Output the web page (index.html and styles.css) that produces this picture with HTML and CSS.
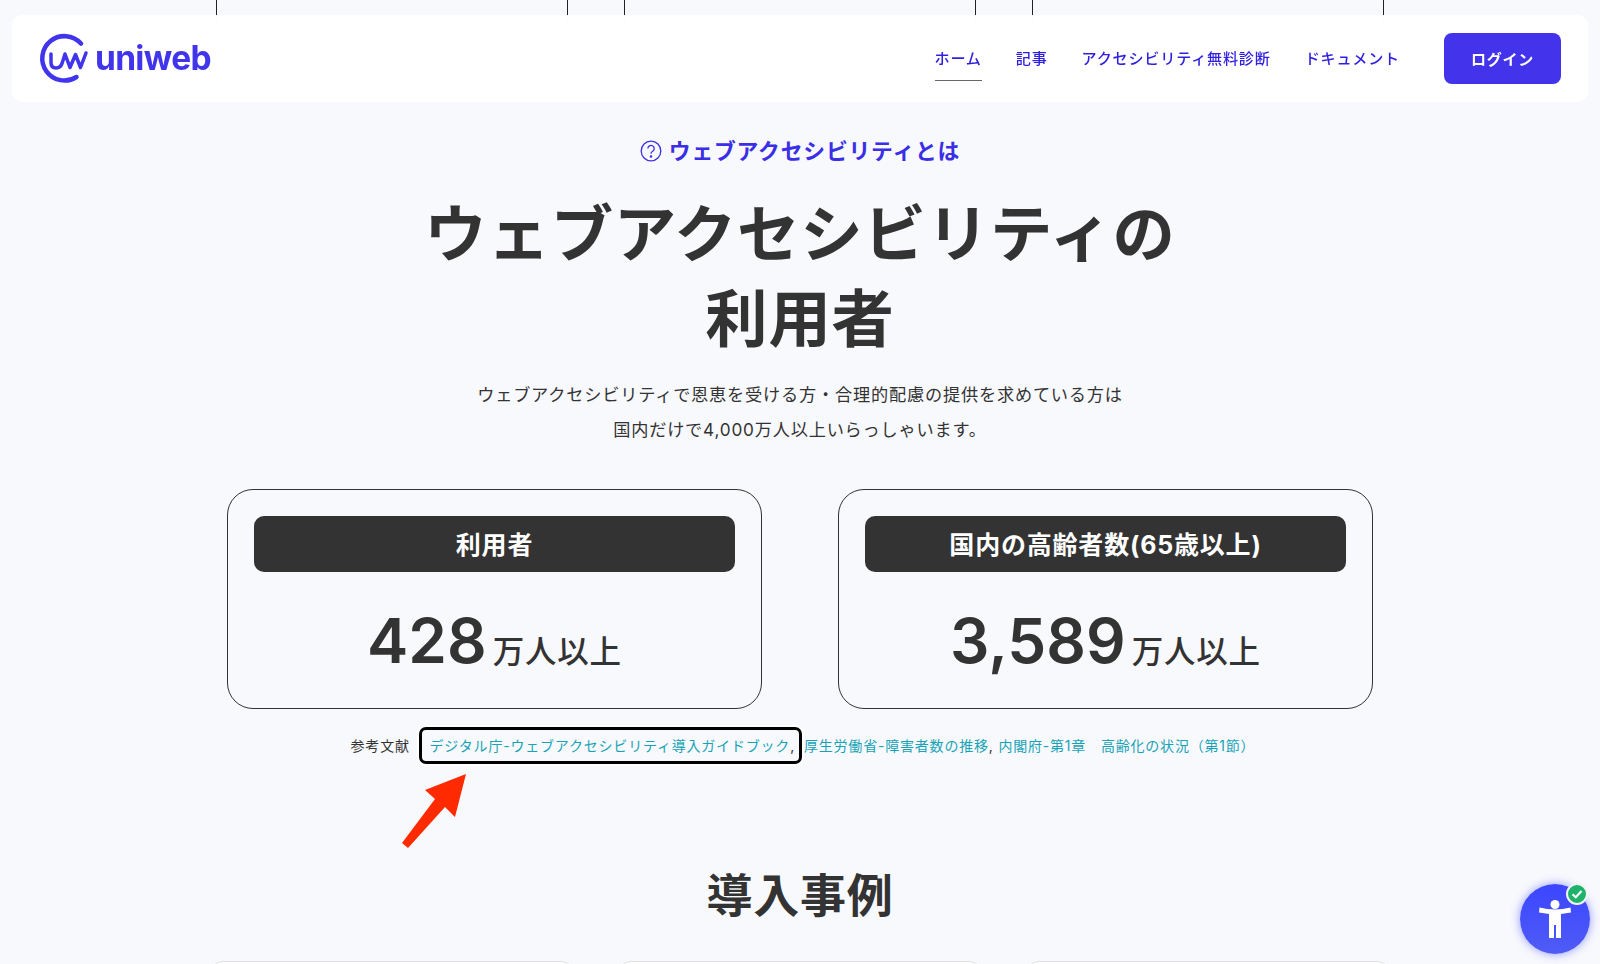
FILE: index.html
```html
<!DOCTYPE html>
<html lang="ja">

<head>
    <meta charset="UTF-8">
    <meta name="viewport" content="width=device-width, initial-scale=1.0">
    <title>ウェブアクセシビリティの利用者 | uniweb</title>
    <link rel="stylesheet" href="styles.css">
</head>

<body>
    <div class="page">
        <div class="card-row card-row-top">
            <div class="stub"></div>
            <div class="stub"></div>
            <div class="stub"></div>
        </div>

        <header class="site-header">
            <a class="logo" href="#">
                <svg class="logo-mark" viewBox="0 0 50 50" width="50" height="50" aria-hidden="true">
                    <path class="logo-ring" d="M44 9.500A22.200 22.200 0 1 0 39.500 43" />
                    <path class="logo-uw" d="M14 20V28.500Q14 34 19 34Q24 34 25.500 28L28 20L33 33.500L38.500 20.500L43.500 33.500L49 19" />
                </svg>
                <span class="logo-text">uniweb</span>
            </a>
            <nav class="nav">
                <a class="nav-link active" href="#">ホーム</a>
                <a class="nav-link" href="#">記事</a>
                <a class="nav-link" href="#">アクセシビリティ無料診断</a>
                <a class="nav-link" href="#">ドキュメント</a>
            </nav>
            <a class="login" href="#">ログイン</a>
        </header>

        <main class="main">
            <p class="eyebrow">
                <svg viewBox="0 0 22 22" width="22" height="22" aria-hidden="true">
                    <circle cx="11" cy="11" r="9.800" />
                    <path d="M7.800 8.600A3.200 3.200 0 1 1 12.700 11.300Q11 12.200 11 13.800" />
                    <circle class="dot" cx="11" cy="16.400" r="0.600" />
                </svg>
                ウェブアクセシビリティとは
            </p>
            <h1 class="title">ウェブアクセシビリティの<br>利用者</h1>
            <p class="lead">ウェブアクセシビリティで恩恵を受ける方・合理的配慮の提供を求めている方は<br>国内だけで4,000万人以上いらっしゃいます。</p>

            <div class="stats">
                <div class="stat">
                    <div class="stat-label">利用者</div>
                    <div class="stat-value"><span class="num">428</span><span class="unit">万人以上</span></div>
                </div>
                <div class="stat">
                    <div class="stat-label">国内の高齢者数(65歳以上)</div>
                    <div class="stat-value"><span class="num">3,589</span><span class="unit">万人以上</span></div>
                </div>
            </div>

            <p class="refs">
                参考文献 <span class="focused"><a href="#">デジタル庁-ウェブアクセシビリティ導入ガイドブック</a>,</span><a href="#">厚生労働省-障害者数の推移</a>, <a href="#">内閣府-第1章　高齢化の状況（第1節）</a>
            </p>

            <h2 class="section-title">導入事例</h2>

            <div class="card-row card-row-bottom">
                <div class="case"></div>
                <div class="case"></div>
                <div class="case"></div>
            </div>
        </main>

        <!-- red arrow drawn over the screenshot -->
        <svg class="arrow" viewBox="0 0 70 80" width="70" height="80" aria-hidden="true">
            <path d="M66 2L55 45L45 35L8 76L2 71L35 27L25 18Z" />
        </svg>

        <button class="a11y-btn" aria-label="アクセシビリティ">
            <svg viewBox="0 0 70 70" width="70" height="70" aria-hidden="true">
                <circle cx="35" cy="20.500" r="4.500" />
                <path d="M19.500 23.500L19 28.500L29 30V54H34V41H36V54H41V30L51 28.500L50.500 23.500Q35 27.500 19.500 23.500Z" />
            </svg>
            <span class="a11y-badge">
                <svg viewBox="0 0 16 16" width="16" height="16" aria-hidden="true">
                    <path d="M3.500 8.200L6.800 11.200L12.500 5" />
                </svg>
            </span>
        </button>
    </div>
</body>

</html>
```

FILE: styles.css
```css
* {
    box-sizing: border-box;
}

body {
    font-family: Inter, 'Noto Sans CJK JP', sans-serif;
    background: #f8f9fd;
    margin: 0;
    padding: 0;
    color: #333;
    letter-spacing: 0.05em;
}

a {
    text-decoration: none;
}

.page {
    position: relative;
    height: 100vh;
    overflow: hidden;
}

.card-row {
    display: flex;
    justify-content: center;
}

.card-row-top {
    gap: 56px;
    height: 87px;
}

.stub {
    width: 352px;
    background: #f8f9fd;
    border: 1px solid #222;
    border-top: none;
    border-radius: 0 0 24px 24px;
}

.site-header {
    position: fixed;
    top: 15px;
    left: 12px;
    right: 12px;
    height: 87px;
    display: flex;
    align-items: center;
    padding: 0 27px 0 25px;
    background: rgba(255, 255, 255, 0.97);
    backdrop-filter: blur(12px);
    border-radius: 10px;
}

.logo {
    display: flex;
    align-items: center;
    gap: 8px;
    color: #4034ec;
}

.logo-mark {
    overflow: visible;
}

.logo-ring,
.logo-uw {
    fill: none;
    stroke: #4034ec;
}

.logo-ring {
    stroke-width: 4.500;
    stroke-linecap: round;
}

.logo-uw {
    stroke-width: 3.500;
    stroke-linejoin: round;
    stroke-linecap: round;
}

.logo-text {
    font-family: Inter, sans-serif;
    font-size: 33.500px;
    font-weight: 700;
    letter-spacing: -0.02em;
    line-height: 1;
}

.nav {
    display: flex;
    gap: 34px;
    margin-left: auto;
}

.nav-link {
    display: block;
    height: 44px;
    padding-top: 11px;
    font-size: 15.100px;
    font-weight: 500;
    line-height: 22px;
    color: #2f1fe0;
    white-space: nowrap;
}

.nav-link.active {
    border-bottom: 1px solid #666;
}

.login {
    width: 117px;
    height: 51px;
    margin-left: 44px;
    display: flex;
    align-items: center;
    justify-content: center;
    font-size: 15px;
    font-weight: 700;
    color: #fff;
    background: #4334ec;
    border-radius: 8px;
}

.main {
    display: flex;
    flex-direction: column;
    align-items: center;
}

.eyebrow {
    display: flex;
    align-items: center;
    gap: 7px;
    height: 30px;
    margin: 47px 0 28px;
    font-size: 21.800px;
    font-weight: 700;
    color: #3a2ee6;
}

.eyebrow svg {
    margin-top: 4px;
    fill: none;
    stroke: #3a2ee6;
    stroke-width: 1.300;
}

.eyebrow .dot {
    fill: #3a2ee6;
}

.title {
    margin: 0;
    font-size: 62.400px;
    font-weight: 700;
    line-height: 85px;
    text-align: center;
}

.lead {
    margin: 15px 0 42px;
    font-size: 17.200px;
    line-height: 35px;
    text-align: center;
}

.stats {
    display: flex;
    gap: 76px;
}

.stat {
    width: 535px;
    height: 220px;
    padding: 26px;
    border: 1px solid #333;
    border-radius: 26px;
}

.stat-label {
    height: 56px;
    display: flex;
    align-items: center;
    justify-content: center;
    padding-bottom: 3px;
    font-size: 25px;
    font-weight: 700;
    color: #fff;
    background: #333;
    border-radius: 10px;
}

.stat-value {
    display: flex;
    align-items: baseline;
    justify-content: center;
    gap: 6px;
    margin-top: 31px;
    line-height: 76px;
}

.num {
    font-size: 62px;
    font-weight: 600;
    letter-spacing: 0;
}

.unit {
    font-size: 31.500px;
    font-weight: 500;
}

.refs {
    margin: 25px 0 0;
    height: 24px;
    padding-left: 6px;
    font-size: 14px;
    line-height: 24px;
    white-space: nowrap;
}

.refs a {
    color: #17a3b5;
}

.focused {
    margin: 0 2px 0 4px;
    padding: 7px 4px 7px 8px;
    border: 3px solid #000;
    border-radius: 7px;
    box-shadow: 0 0 0 2px #fff;
}

.section-title {
    margin: 107px 0 0;
    font-size: 46px;
    font-weight: 700;
    line-height: 60px;
}

.card-row-bottom {
    gap: 42px;
    margin-top: 36px;
}

.case {
    width: 366px;
    height: 200px;
    background: #fff;
    border: 1px solid #dfe1e8;
    border-radius: 14px;
}

.arrow {
    position: absolute;
    left: 400px;
    top: 772px;
}

.arrow path {
    fill: #ff2a00;
}

.a11y-btn {
    position: fixed;
    left: 1520px;
    top: 884px;
    width: 70px;
    height: 70px;
    padding: 0;
    border: none;
    border-radius: 50%;
    background: linear-gradient(to bottom, #3b46ff, #4f5cf5);
    box-shadow: 0 0 10px rgba(60, 70, 255, 0.55);
}

.a11y-btn > svg {
    display: block;
    fill: #fff;
}

.a11y-badge {
    position: absolute;
    left: 46px;
    top: -1px;
    width: 22px;
    height: 22px;
    display: flex;
    align-items: center;
    justify-content: center;
    background: #1eb26a;
    border: 2px solid #f2f4f4;
    border-radius: 50%;
}

.a11y-badge svg {
    fill: none;
    stroke: #fff;
    stroke-width: 2.200;
}
```
